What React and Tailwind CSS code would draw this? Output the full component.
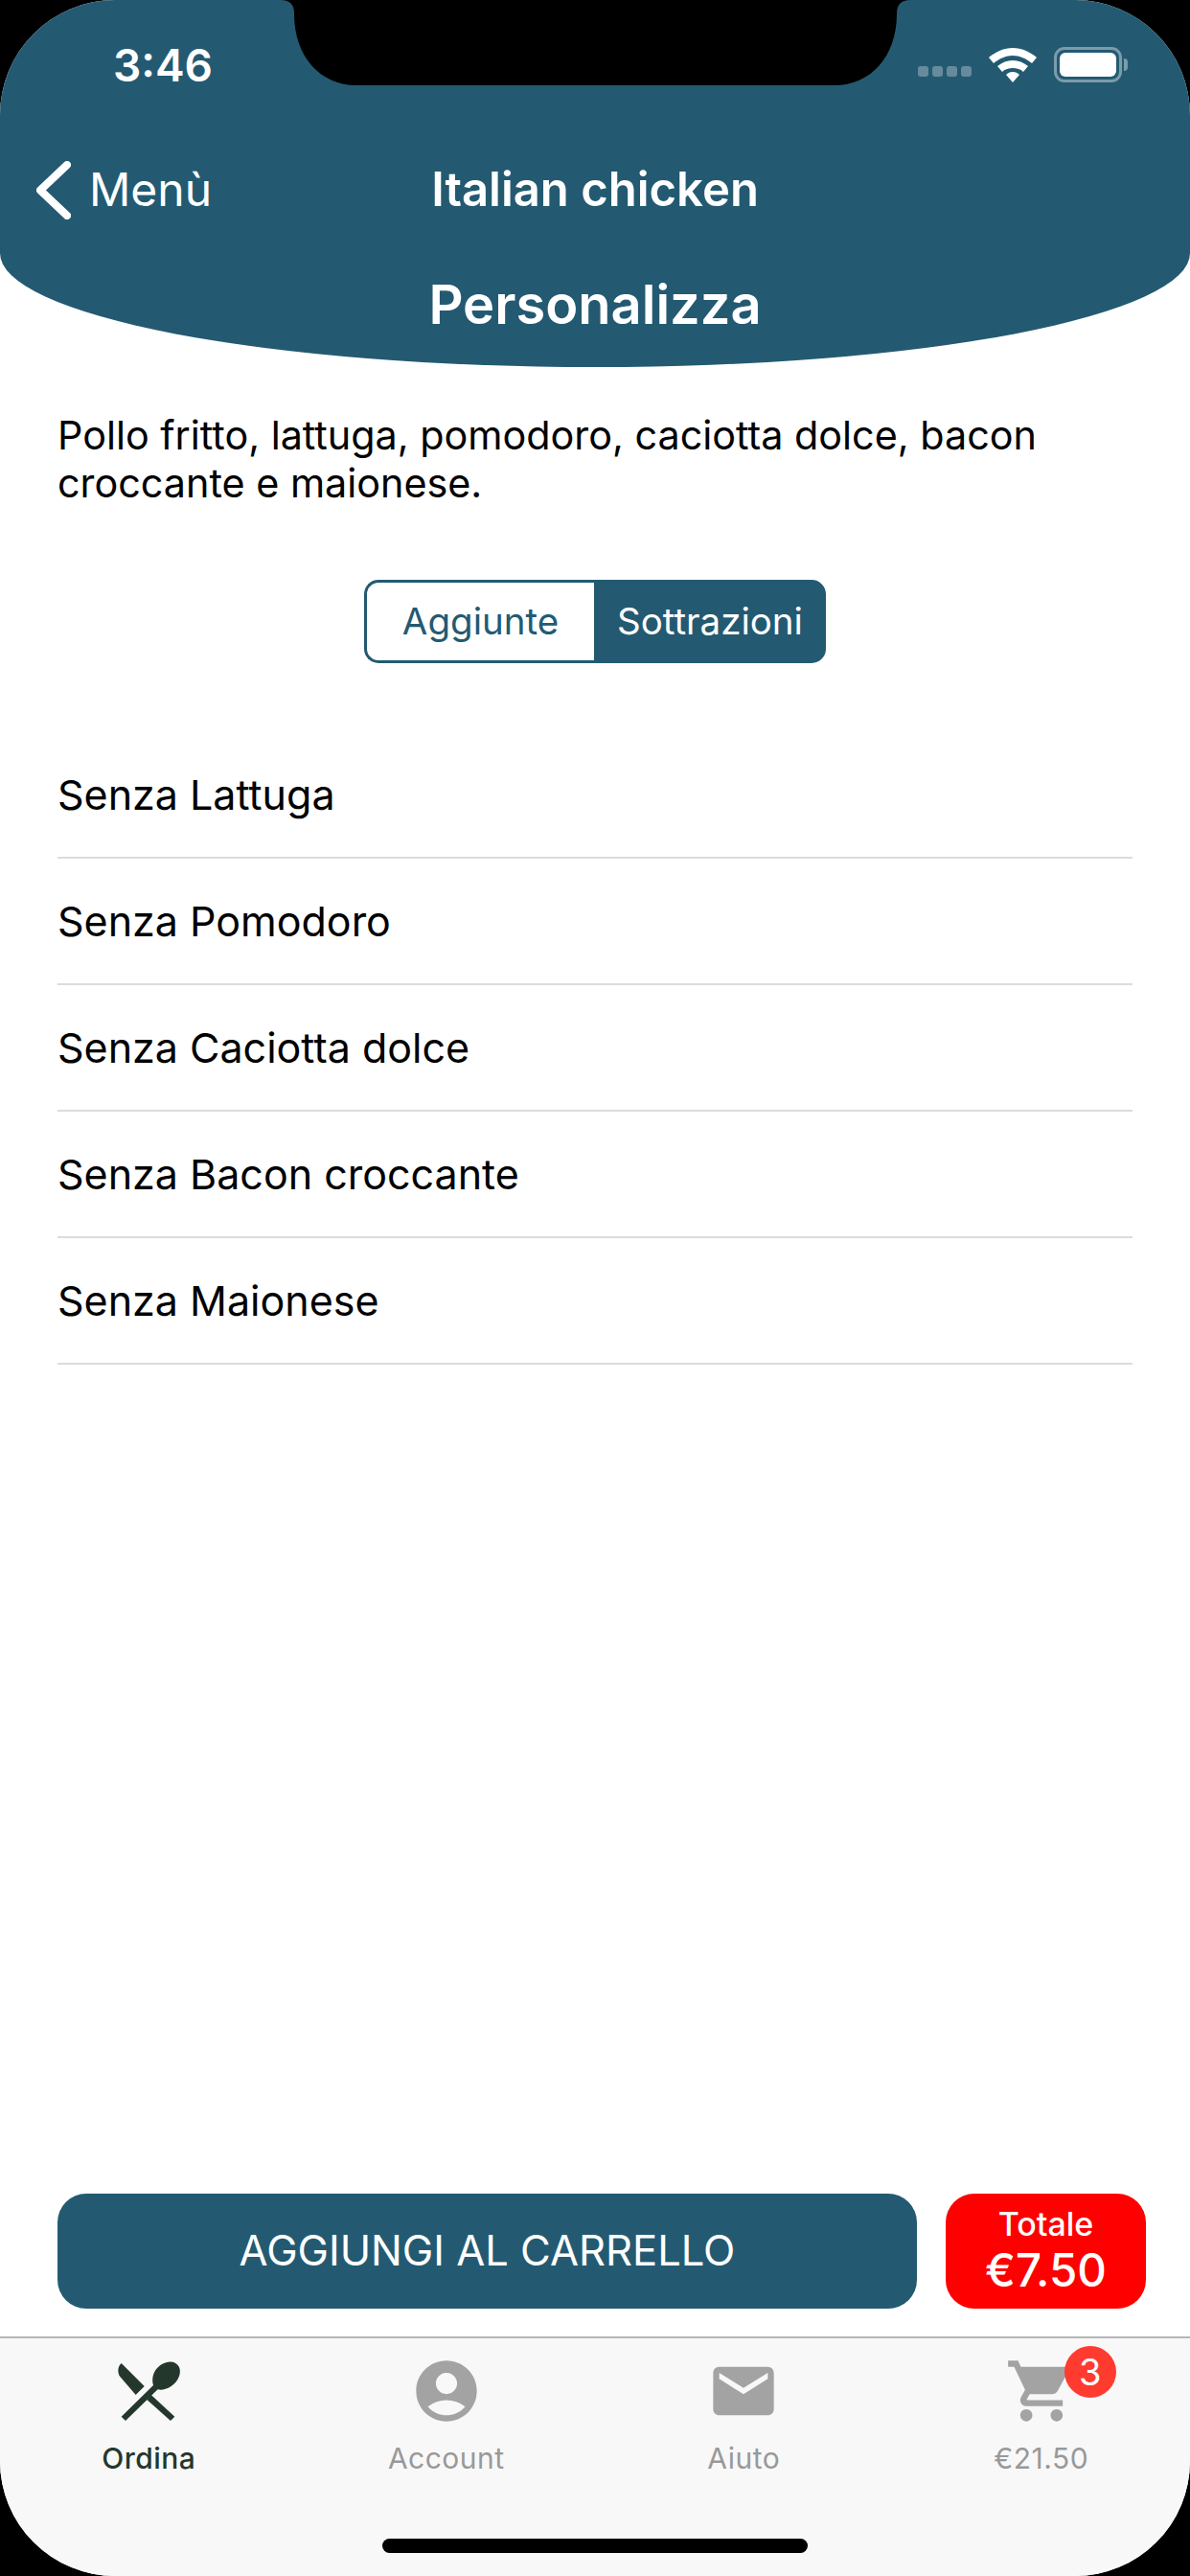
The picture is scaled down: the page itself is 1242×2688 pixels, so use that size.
import { MdAccountCircle, MdMail, MdShoppingCart } from 'react-icons/md';

const sottrazioni = ['Senza Lattuga', 'Senza Pomodoro', 'Senza Caciotta dolce', 'Senza Bacon croccante', 'Senza Maionese'];

function IconaOrdina() {
  return (
    <svg viewBox="0 0 390 330" className="w-[130px] h-[110px] -my-[17px]" fill="#24372c">
      <path d="M110 78 C98 88 97 108 106 120 L155 177 L182 150 Z" />
      <path d="M204 178 L277 245 L264 258 L190 192 Z" />
      <path d="M110 245 L210 147 C204 125 210 100 232 84 C255 68 282 70 291 90 C299 110 288 135 266 150 C250 160 235 163 224 160 L123 258 Z" />
    </svg>
  );
}

function StatusBar() {
  return (
    <div className="h-[134px] flex items-start justify-between pl-[118px] pr-[65px] pt-[47px]">
      <span className="text-[46px] leading-[42px] font-semibold text-white">3:46</span>
      <div className="flex items-center pt-[2px]">
        <div className="flex gap-[4px] mr-[18px] mt-[13px]">
          <span className="w-[11px] h-[11px] rounded-[3px] bg-white/30" />
          <span className="w-[11px] h-[11px] rounded-[3px] bg-white/30" />
          <span className="w-[11px] h-[11px] rounded-[3px] bg-white/30" />
          <span className="w-[11px] h-[11px] rounded-[3px] bg-white/30" />
        </div>
        <svg viewBox="0 0 50 36" className="w-[50px] h-[36px] mr-[18px]" fill="white">
          <path d="M25 0 C34 0 43 4 50 10 L45 16 C39 11 32 8 25 8 C18 8 11 11 5 16 L0 10 C7 4 16 0 25 0 Z" />
          <path d="M25 13 C31 13 36 15 41 19 L36 25 C33 22 29 21 25 21 C21 21 17 22 14 25 L9 19 C14 15 19 13 25 13 Z" />
          <path d="M25 25 C28 25 30 26 32 28 L25 36 L18 28 C20 26 22 25 25 25 Z" />
        </svg>
        <div className="w-[71px] h-[37px] rounded-[11px] border-[3px] border-white/40 p-[3px]">
          <div className="w-full h-full rounded-[6px] bg-white" />
        </div>
        <div className="w-[4px] h-[13px] rounded-r-[4px] bg-white/40 ml-[2px]" />
      </div>
    </div>
  );
}

function Tab({ icona, label, attiva }) {
  return (
    <div className="flex flex-col items-center">
      <div className="relative h-[76px] flex items-center justify-center">
        {icona}
      </div>
      <span className={`mt-[12px] text-[30px] leading-[40px] tracking-[0.5px] ${attiva ? 'text-[#24372c] font-medium' : 'text-[#999999]'}`}>
        {label}
      </span>
    </div>
  );
}

export default function App() {
  return (
    <div className="h-[2688px] bg-black font-['Inter',sans-serif]">
      <div className="relative h-full rounded-[120px] overflow-hidden bg-white flex flex-col">
        {/* Header */}
        <header className="h-[383px] bg-[#235a72] rounded-bl-[621px_119px] rounded-br-[621px_119px] text-white">
          <StatusBar />
          <div className="grid grid-cols-[1fr_auto_1fr] items-center h-[128px]">
            <div className="flex items-center pl-[38px] gap-[19px]">
              <svg viewBox="0 0 36 61" className="w-[36px] h-[61px]" fill="none" stroke="white" strokeWidth="8" strokeLinecap="round" strokeLinejoin="round">
                <path d="M32 4 L4 30.5 L32 57" />
              </svg>
              <span className="text-[48px] leading-[60px]">Menù</span>
            </div>
            <h1 className="text-[49px] leading-[60px] font-semibold">Italian chicken</h1>
            <div />
          </div>
          <h2 className="mt-[24px] text-[56px] leading-[64px] font-semibold text-center">Personalizza</h2>
        </header>

        {/* Notch */}
        <svg viewBox="0 0 1242 89" className="absolute left-0 top-0 w-full h-[89px]" fill="black">
          <path d="M293 0 Q307 0 307 14 C307 60 335 89 372 89 H871 C908 89 936 60 936 14 Q936 0 950 0 Z" />
        </svg>

        {/* Konten */}
        <main className="flex-1 flex flex-col px-[60px]">
          <p className="mt-[46px] text-[41.3px] leading-[50px] text-black">
            Pollo fritto, lattuga, pomodoro, caciotta dolce, bacon croccante e maionese.
          </p>

          <div className="mt-[76px] flex justify-center">
            <div className="w-[240px] h-[87px] rounded-l-[15px] border-[3px] border-r-0 border-[#235a72] flex items-center justify-center text-[38.5px] text-[#235a72]">
              Aggiunte
            </div>
            <div className="w-[242px] h-[87px] rounded-r-[15px] bg-[#235a72] flex items-center justify-center text-[38.5px] text-white">
              Sottrazioni
            </div>
          </div>

          <ul className="mt-[72px]">
            {sottrazioni.map((voce) => (
              <li key={voce} className="h-[132px] flex items-center border-b-2 border-[#dcdcdc] text-[43px] text-black">
                {voce}
              </li>
            ))}
          </ul>

          <div className="mt-auto mb-[29px] -mr-[14px] flex">
            <button className="w-[897px] h-[120px] rounded-[30px] bg-[#235a72] text-white text-[43.5px] flex items-center justify-center">
              AGGIUNGI AL CARRELLO
            </button>
            <div className="ml-[30px] w-[209px] h-[120px] rounded-[30px] bg-[#ff0000] text-white flex flex-col items-center justify-center shrink-0">
              <span className="text-[34px] leading-[40px] font-medium">Totale</span>
              <span className="text-[47.5px] leading-[56px] font-medium">€7.50</span>
            </div>
          </div>
        </main>

        {/* Tab bar */}
        <nav className="relative h-[250px] bg-[#f8f8f8] border-t-2 border-[#b5b5b5] grid grid-cols-4 pt-[17px] content-start">
          <Tab attiva label="Ordina" icona={<IconaOrdina />} />
          <Tab label="Account" icona={<MdAccountCircle className="w-[76px] h-[76px] text-[#a3a3a3]" />} />
          <Tab label="Aiuto" icona={<MdMail className="w-[76px] h-[76px] text-[#a3a3a3]" />} />
          <Tab
            label="€21.50"
            icona={
              <>
                <MdShoppingCart className="w-[76px] h-[76px] text-[#a3a3a3]" />
                <span className="absolute -top-[9px] -right-[40px] w-[54px] h-[54px] rounded-full bg-[#ff3b30] text-white text-[38px] flex items-center justify-center">
                  3
                </span>
              </>
            }
          />
          <div className="absolute left-[399px] bottom-[24px] w-[444px] h-[15px] rounded-full bg-black" />
        </nav>
      </div>
    </div>
  );
}
